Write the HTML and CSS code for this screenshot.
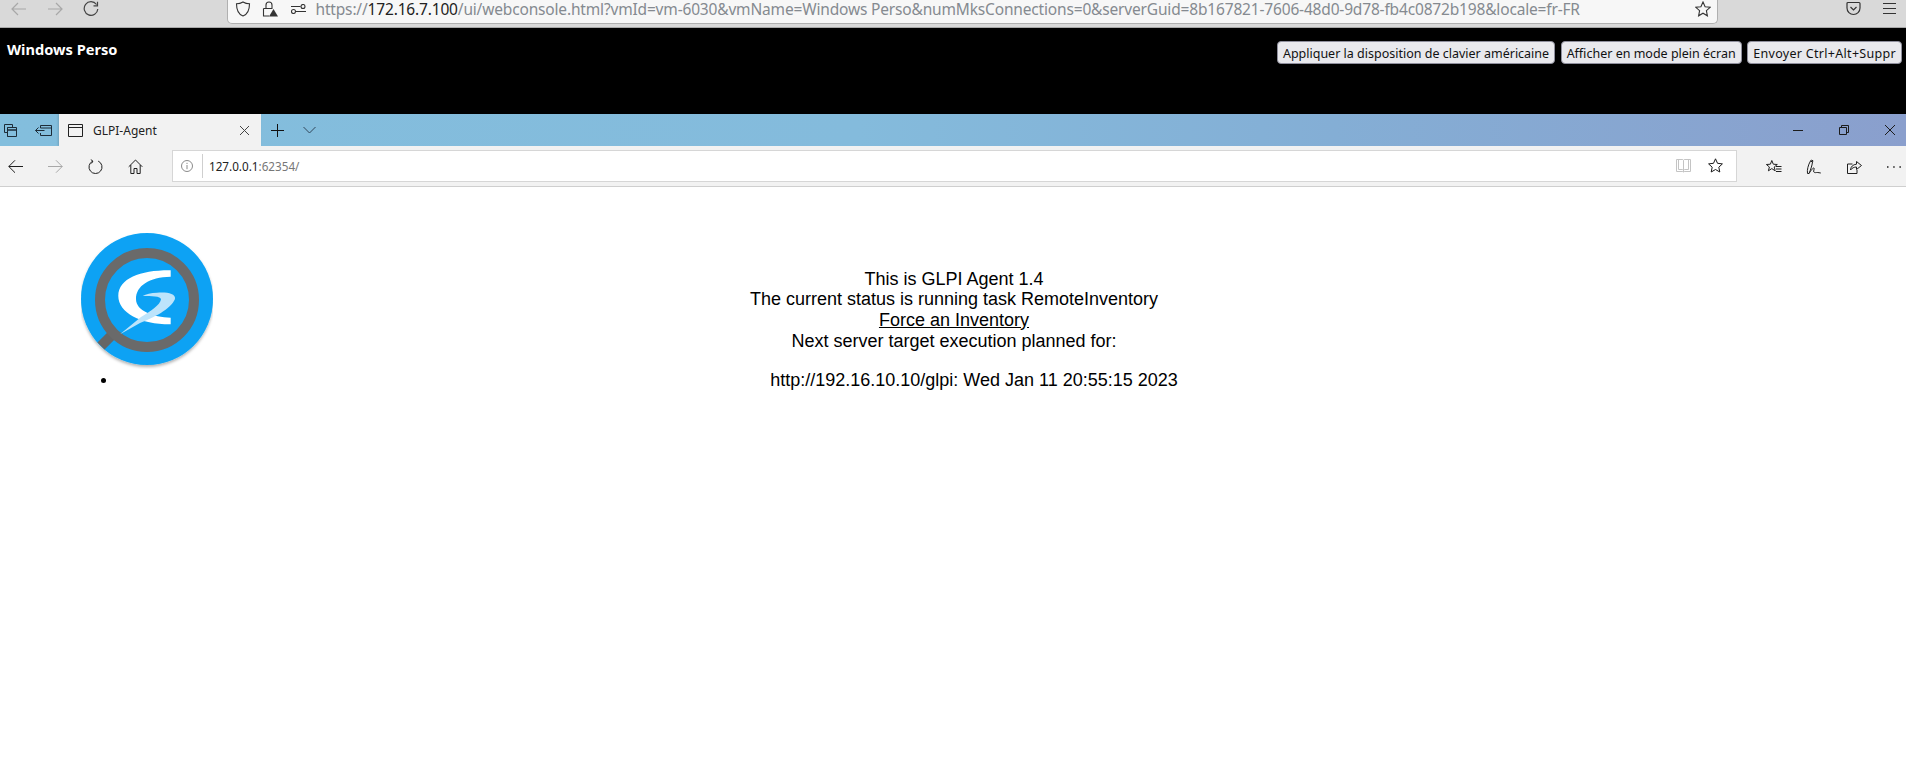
FILE: index.html
```html
<!DOCTYPE html>
<html lang="fr">
<head>
<meta charset="utf-8">
<title>GLPI-Agent</title>
<link rel="stylesheet" href="styles.css">
</head>
<body>
<header class="ff-bar">
  <div class="ff-nav">
    <svg class="ic ff-ic" viewBox="0 0 16 16"><path class="dim" d="M15 8H1M7 2L1 8l6 6"/></svg>
    <svg class="ic ff-ic" viewBox="0 0 16 16"><path class="dim" d="M1 8h14M9 2l6 6-6 6"/></svg>
    <svg class="ic ff-ic" viewBox="0 0 16 16"><path d="M13.500 3.500A6.800 6.800 0 1 0 14.800 8M14.500 .8V4.800h-4"/></svg>
  </div>
  <div class="ff-url">
    <svg class="ic url-ic" viewBox="0 0 16 16"><path d="M8 1c2 1.200 4 1.800 6.500 1.800 0 6-1.500 10.500-6.500 12.200C3 13.300 1.500 8.800 1.500 2.800 4 2.800 6 2.200 8 1z"/></svg>
    <svg class="ic url-ic" viewBox="0 0 16 16"><path d="M4 7V4a3 3 0 0 1 6 0v3M1.500 7.500h9M1.500 7.500v7.500h5.500"/><path class="fill" d="M11.500 8l4.500 7.500H7z"/></svg>
    <svg class="ic url-ic small" viewBox="0 0 15 10"><path d="M4.500 7.500H15M0 2.500h9.500"/><circle cx="2.500" cy="7.500" r="2"/><circle cx="12" cy="2.500" r="2"/></svg>
    <span class="url-text">https://<b>172.16.7.100</b>/ui/webconsole.html?vmId=vm-6030&amp;vmName=Windows Perso&amp;numMksConnections=0&amp;serverGuid=8b167821-7606-48d0-9d78-fb4c0872b198&amp;locale=fr-FR</span>
    <svg class="ic url-star" viewBox="0 0 16 16"><path d="M8 1l2.100 4.700 5.100.6-3.800 3.400 1 5.100L8 12.200l-4.400 2.600 1-5.100L.8 6.300l5.100-.6z"/></svg>
  </div>
  <div class="ff-right">
    <svg class="ic ff-small" viewBox="0 0 15 15"><path d="M2 1.500h11a1 1 0 0 1 1 1v4.500a6.500 6.500 0 0 1-13 0V2.500a1 1 0 0 1 1-1zM4.500 6l3 3 3-3"/></svg>
    <svg class="ic ff-small" viewBox="0 0 15 15"><path d="M1 2.500h13M1 7.500h13M1 12.500h13"/></svg>
  </div>
</header>

<section class="console-bar">
  <div class="vm-name">Windows Perso</div>
  <div class="console-actions">
    <button class="console-btn">Appliquer la disposition de clavier américaine</button>
    <button class="console-btn">Afficher en mode plein écran</button>
    <button class="console-btn console-btn-last">Envoyer Ctrl+Alt+Suppr</button>
  </div>
</section>

<section class="edge">
  <div class="tabs">
    <div class="tab-tool tool-a">
      <svg class="ic tab-ic" viewBox="0 0 13 13"><path d="M.5.5h8v2.500M.5.5v8h2.500M3.500 3.500h9v2.500h-9zM3.500 6h9v6.500h-9zM3.500 3.500v9"/></svg>
    </div>
    <div class="tab-tool tool-b">
      <svg class="ic tab-ic" viewBox="0 0 17 11"><path d="M5.500 3V.5h11v10h-11V8M5.500 3h11M.5 5.500h9M3.500 2.500l-3 3 3 3"/></svg>
    </div>
    <div class="tab">
      <svg class="ic tab-page" viewBox="0 0 15 13"><path d="M.5.5h14v12H.5zM.5 3.500h14"/></svg>
      <span class="tab-title">GLPI-Agent</span>
      <svg class="ic tab-x" viewBox="0 0 11 11"><path d="M1 1l9 9M10 1l-9 9"/></svg>
    </div>
    <div class="tab-new">
      <svg class="ic tab-plus" viewBox="0 0 13 13"><path d="M6.500 0v13M0 6.500h13"/></svg>
    </div>
    <div class="tab-new">
      <svg class="ic tab-chev" viewBox="0 0 13 8"><path d="M.5 1l6 6 6-6"/></svg>
    </div>
    <div class="win-ctrls">
      <svg class="ic win-ic" viewBox="0 0 10 10"><path d="M0 5.500h10"/></svg>
      <svg class="ic win-ic" viewBox="0 0 10 10"><path d="M.5 2.500h7v7h-7zM2.500 2.500v-2h7v7h-2"/></svg>
      <svg class="ic win-ic" viewBox="0 0 10 10"><path d="M0 0l10 10M10 0L0 10"/></svg>
    </div>
  </div>
  <div class="toolbar">
    <div class="tb-left">
      <svg class="ic tb-ic" viewBox="0 0 15 15"><path d="M15 7.500H.8M7 1.300L.8 7.500 7 13.700"/></svg>
      <svg class="ic tb-ic" viewBox="0 0 15 15"><path class="dim" d="M0 7.500h14.200M8 1.300l6.200 6.200L8 13.700"/></svg>
      <svg class="ic tb-ic" viewBox="0 0 15 15"><path d="M4.800 2.100A6.500 6.500 0 1 0 10.200 2.100M2.800.6l2.100 1.500-1.300 2.300"/></svg>
      <svg class="ic tb-ic" viewBox="0 0 15 15"><path d="M.7 7.800L7.500 1l6.800 6.800M2.800 6v8.500h3.200V9.500h3v5h3.200V6"/></svg>
    </div>
    <div class="addr">
      <div class="addr-info">
        <svg class="ic info-ic" viewBox="0 0 12 12"><circle cx="6" cy="6" r="5.500"/><path d="M6 5v4.200M6 2.800v1.200"/></svg>
      </div>
      <span class="addr-text">127.0.0.1<span class="addr-port">:62354/</span></span>
      <svg class="ic addr-book" viewBox="0 0 15 15"><path d="M.5 1.500h6.300l.7 1 .7-1h6.300v12h-6.300l-.7.500-.7-.5H.5zM7.500 2.500V14M2.500 1.500v10h4l1 1 1-1h4v-10"/></svg>
      <svg class="ic addr-star" viewBox="0 0 15 15"><path d="M7.500.8l2 4.500 4.900.6-3.600 3.300 1 4.800-4.300-2.500-4.300 2.500 1-4.800L.6 5.900l4.900-.6z"/></svg>
    </div>
    <div class="tb-right">
      <svg class="ic tb-ic wide" viewBox="0 0 16 16"><path d="M5.800 1.500l1.500 3.700 4 .3-3.100 2.500 1 3.800-3.400-2.200-3.400 2.200 1-3.800L.4 5.500l4-.3zM10 7.500h5.500M10 10h5.500M10 12.500h5.500"/></svg>
      <svg class="ic tb-ic wide" viewBox="0 0 16 16"><path d="M1.500 14.500c-.6-3.500.6-8.500 3-12.500l2 1c-.5 4-2 8-3.500 11.500zM4.500 2l1-1 1.500.8-.5 1.200M3 14.500c2-3 4-6 5-5.500.7.500-.8 3-.2 4 .8 1.200 2.500.3 4 .5 1 .1 2 .3 3 .5"/></svg>
      <svg class="ic tb-ic wide" viewBox="0 0 16 16"><path d="M6.500 5H1.500v9.500H11V11M4.500 11c.3-3.500 2.500-5.500 6-5.800V2.500L15.500 6.500l-5 4V8C8 8 6 9 4.500 11z"/></svg>
      <svg class="ic tb-ic wide" viewBox="0 0 16 16"><path class="dot" d="M1 8h1.500M7.200 8h1.500M13.400 8h1.500"/></svg>
    </div>
  </div>
</section>

<main class="page">
  <div class="agent">
    <svg class="logo" viewBox="0 0 132 136">
      <defs>
        <filter id="soft" x="-10%" y="-10%" width="120%" height="125%"><feDropShadow dx="0" dy="2" stdDeviation="1.500" flood-color="#000" flood-opacity=".3"/></filter>
      </defs>
      <circle cx="66" cy="66" r="66" fill="#08a2f4" filter="url(#soft)"/>
      <path d="M33 100L20 113" stroke="#666" stroke-width="10" fill="none"/>
      <circle cx="66" cy="67" r="47" fill="none" stroke="#6a6a6a" stroke-width="10"/>
      <path d="M89.700 37.300C60 37 37.500 45 37.300 63 37.300 80 60 91.500 89.700 91.300V84.700C72 84 55 78 55 66 55 53 68 44 89.700 43.700z" fill="#fff"/>
      <path d="M39 101.300L59 90C72 85 90 76 94 66 95 60 85 59 76 59.700 70 60 65 61 61.700 63 70 63 80 63 80 66.500 79 72 70 78 60 84z" fill="#bde4fb"/>
    </svg>
    <ul class="agent-list"><li>&nbsp;</li></ul>
  </div>
  <div class="status">
    This is GLPI Agent 1.4<br>
    The current status is running task RemoteInventory<br>
    <a href="#">Force an Inventory</a><br>
    Next server target execution planned for:
    <ul class="targets"><li>http://192.16.10.10/glpi: Wed Jan 11 20:55:15 2023</li></ul>
  </div>
</main>
</body>
</html>
```

FILE: styles.css
```css
* { box-sizing: border-box; }
html, body { margin: 0; height: 100%; overflow: hidden; background: #fff; }
body { font-family: "Noto Sans", sans-serif; color: #000; }

.ic { display: block; fill: none; stroke: #2b2b2b; stroke-width: 1; flex: none; }
.dim { stroke: #a8a8a8; }
.fill { fill: #333; stroke: none; }

/* Firefox bar */
.ff-bar { height: 28px; background: #d9d9d9; border-bottom: 1px solid #a8a8a8; display: flex; align-items: flex-start; }
.ff-nav { width: 226.500px; display: flex; padding: 1px 0 0 11px; gap: 20px; }
.ff-ic { width: 16px; height: 16px; stroke-width: 1.200; stroke: #444; }
.ff-url { width: 1491px; height: 24px; background: #f7f7f7; border: 1px solid #b0b0b0; border-top: 0; border-radius: 0 0 5px 5px; display: flex; align-items: center; padding: 0 0 6px 7px; }
.url-ic { width: 16px; height: 16px; margin-right: 11px; stroke: #333; stroke-width: 1.100; }
.url-ic.small { width: 15px; height: 10px; margin: 0 10px 0 2px; }
.url-text { font-size: 15.500px; line-height: 16px; color: #858a90; white-space: nowrap; flex: 1; letter-spacing: -.17px; }
.url-text b { font-weight: 400; color: #222; }
.url-star { width: 16px; height: 16px; stroke: #333; stroke-width: 1.100; margin-right: 6px; }
.ff-right { display: flex; gap: 21px; padding: 1px 0 0 128px; }
.ff-small { width: 15px; height: 15px; stroke: #333; stroke-width: 1.200; }

/* VMware console bar */
.console-bar { height: 86px; background: #000; display: flex; justify-content: space-between; padding: 11px 4px 0 7px; }
.vm-name { font-size: 14.600px; font-weight: 700; color: #fff; line-height: 20px; }
.console-actions { display: flex; gap: 5.500px; height: 23px; margin-top: 2px; }
.console-btn { font-family: "Noto Sans", sans-serif; font-size: 12.500px; color: #111; background: #e9e9ed; border: 1px solid #8f8f9d; border-radius: 4px; padding: 1px 5px 0; height: 23px; white-space: nowrap; }
.console-btn-last { letter-spacing: .3px; }

/* Edge window */
.edge { display: flex; flex-direction: column; }
.tabs { height: 32px; background: linear-gradient(90deg, #83bedd 0%, #84bbdc 45%, #84aed5 70%, #8a9fcd 100%); display: flex; align-items: center; padding-left: 4px; }
.tab-tool { display: flex; }
.tool-a { margin-right: 18px; }
.tool-b { margin-right: 7px; }
.tool-a .tab-ic { width: 13px; height: 13px; stroke: #1d2c38; }
.tool-b .tab-ic { width: 17px; height: 11px; stroke: #1d2c38; }
.tab { width: 202px; height: 32px; background: #f2f2f2; display: flex; align-items: center; padding-left: 9px; box-shadow: -1px 0 2px rgba(0,0,0,.15); }
.tab-page { width: 15px; height: 13px; stroke: #222; }
.tab-title { font-size: 12px; color: #222; margin-left: 10px; flex: 1; }
.tab-x { width: 11px; height: 11px; margin-right: 11px; stroke: #444; }
.tab-new { width: 32px; height: 32px; display: flex; align-items: center; justify-content: center; }
.tab-plus { width: 13px; height: 13px; stroke: #111; }
.tab-chev { width: 13px; height: 8px; stroke: #30475a; }
.win-ctrls { margin-left: auto; display: flex; gap: 36px; padding-right: 11px; align-items: center; }
.win-ic { width: 10px; height: 10px; stroke: #1c1c1c; }

.toolbar { height: 41px; background: #f2f2f2; border-bottom: 1px solid #cfcfcf; display: flex; align-items: center; }
.tb-left { display: flex; gap: 25px; padding: 1px 0 0 8px; }
.tb-ic { width: 15px; height: 15px; stroke: #1f1f1f; }
.tb-ic.wide { width: 16px; height: 16px; }
.addr { width: 1565px; height: 32px; margin: -1px 0 0 29px; background: #fff; border: 1px solid #d6d6d6; display: flex; align-items: center; flex: none; }
.addr-info { width: 30px; height: 24px; padding: 6px 0 0 8px; border-right: 1px solid #cfcfcf; }
.info-ic { width: 12px; height: 12px; stroke: #8a8a8a; }
.addr-text { font-size: 11.700px; color: #222; margin-left: 6px; flex: 1; }
.addr-port { color: #777; }
.addr-book { width: 15px; height: 15px; stroke: #c4c4c4; margin-right: 17px; }
.addr-star { width: 15px; height: 15px; stroke: #1a1a1a; margin-right: 13px; }
.tb-right { display: flex; gap: 24px; padding: 1px 0 0 29px; }
.dot { stroke-width: 1.400; }

/* Page */
.page { display: flex; padding-top: 46px; font-family: "Liberation Sans", Arial, sans-serif; font-size: 18px; line-height: 20.700px; }
.agent { width: 292px; flex: none; padding-left: 81px; }
.logo { display: block; width: 132px; height: 136px; }
.agent-list { margin: 1px 0 0; padding: 0 0 0 35.500px; font-size: 16px; line-height: 20px; }
.status { width: 1324px; text-align: center; padding-top: 35.500px; }
.status a { color: #000; }
.targets { margin: 19px 0 0; padding: 0 0 0 40px; list-style: none; }
```
